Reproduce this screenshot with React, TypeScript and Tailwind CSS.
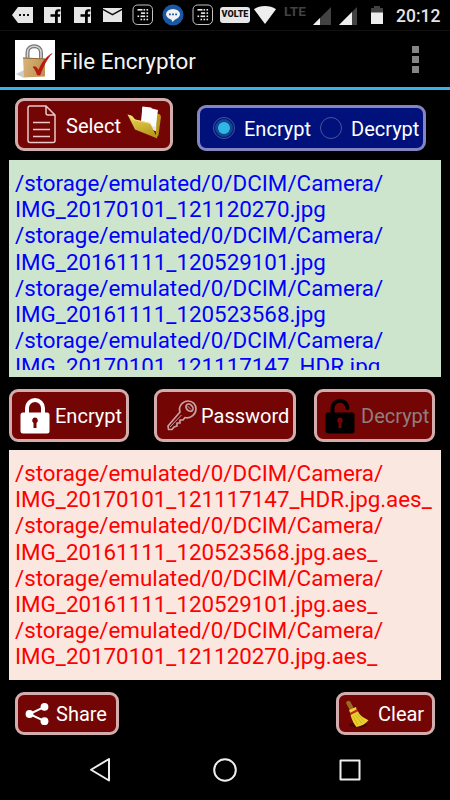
import type { ReactNode } from "react";

const SOURCE_FILES = [
    "IMG_20170101_121120270.jpg",
    "IMG_20161111_120529101.jpg",
    "IMG_20161111_120523568.jpg",
    "IMG_20170101_121117147_HDR.jpg",
];

const ENCRYPTED_FILES = [
    "IMG_20170101_121117147_HDR.jpg.aes_",
    "IMG_20161111_120523568.jpg.aes_",
    "IMG_20161111_120529101.jpg.aes_",
    "IMG_20170101_121120270.jpg.aes_",
];

const FacebookIcon = ({ className }: { className: string }) => (
    <svg viewBox="0 0 17 16" className={`h-4 w-[17px] shrink-0 ${className}`}>
        <path fill="#e6e6e6" d="M0 0h17v16h-3.200V9.800h2.100l.4-2.500h-2.500V5.800c0-.8.4-1.200 1.200-1.200h1.400V2.200h-2.200c-2.100 0-3.200 1.300-3.200 3.200v1.900H6.500v2.500H11V16H0z" />
    </svg>
);

const DialerIcon = ({ className }: { className: string }) => (
    <svg viewBox="0 0 22 22" className={`size-[22px] shrink-0 ${className}`}>
        <rect x="1" y="1" width="19.500" height="19.500" rx="4.500" fill="none" stroke="#c4c4c4" strokeWidth="1" />
        <g fill="#ececec">
            <rect x="5.500" y="5" width="5" height="1.600" />
            <rect x="11.500" y="5" width="1.600" height="1.600" />
            <rect x="14.500" y="5" width="1.600" height="1.600" />
            <rect x="9" y="8.300" width="4.100" height="1.600" />
            <rect x="14.500" y="8.300" width="1.600" height="1.600" />
            <rect x="5.500" y="11.500" width="1.600" height="1.600" />
            <rect x="8.500" y="11.500" width="4.600" height="1.600" />
            <rect x="14.500" y="11.500" width="1.600" height="1.600" />
            <rect x="8.500" y="14.700" width="1.600" height="1.600" />
            <rect x="11.500" y="14.700" width="1.600" height="1.600" />
            <rect x="14.500" y="14.700" width="1.600" height="1.600" />
        </g>
    </svg>
);

const SignalIcon = ({ level, className }: { level: number; className: string }) => (
    <svg viewBox="0 0 18 18" className={`size-[18px] shrink-0 ${className}`}>
        <path fill="#424242" d="M18 0v18H0z" />
        <path fill="#eee" d={`M0 18L${level} ${18 - level}V18z`} />
    </svg>
);

const StatusBar = () => (
    <header className="flex h-[31px] items-start border-b border-[#111] pl-3">
        <svg viewBox="0 0 21 16" className="mt-[7px] h-4 w-[21px] shrink-0">
            <path fill="#e6e6e6" d="M6 0h15v16H6L0 8z" />
            <path stroke="#111" strokeWidth="2" d="M7 8h2M11 8h2M15 8h2" />
        </svg>
        <FacebookIcon className="mt-[7px] ml-[11px]" />
        <FacebookIcon className="mt-[7px] ml-[13px]" />
        <svg viewBox="0 0 19 14" className="mt-2 ml-3 h-[14px] w-[19px] shrink-0">
            <path fill="#e6e6e6" d="M0 0h19v14H0z" />
            <path fill="none" stroke="#111" strokeWidth="1.500" d="M0 1.500l9.500 5.200L19 1.500" />
        </svg>
        <DialerIcon className="mt-1 ml-[10px]" />
        <svg viewBox="0 0 22 22" className="mt-1 ml-2 size-[22px] shrink-0">
            <circle cx="11" cy="11" r="10.500" fill="#1958a5" />
            <ellipse cx="11" cy="10.300" rx="7" ry="5.400" fill="#f2f2f2" />
            <path fill="#f2f2f2" d="M9 14.500h5L10.500 18z" />
            <path stroke="#1958a5" strokeWidth="1.800" d="M7 10.300h1.800M10.100 10.300h1.800M13.200 10.300H15" />
        </svg>
        <DialerIcon className="mt-1 ml-2" />
        <span className="mt-[7px] ml-[6px] flex h-4 w-[30px] shrink-0 items-center justify-center rounded-[3px] bg-[#e6e6e6] text-[9px] font-black text-[#111]">
            VOLTE
        </span>
        <svg viewBox="0 0 22 18" className="mt-[6px] ml-1 h-[18px] w-[22px] shrink-0">
            <path fill="#eee" d="M0 3.200C6-1 16-1 22 3.200L11 18z" />
        </svg>
        <span className="mt-[5px] ml-2 w-[22px] shrink-0 text-[13.500px] leading-[13px] font-bold text-[#424242]">LTE</span>
        <SignalIcon level={7} className="mt-[7px] ml-[7px]" />
        <SignalIcon level={13} className="mt-[7px] ml-[8px]" />
        <svg viewBox="0 0 12 18" className="mt-[6px] ml-[14px] h-[18px] w-3 shrink-0">
            <path fill="#424242" d="M0 2h3V0h6v2h3v5H0z" />
            <path fill="#eee" d="M0 6.500h12V18H0z" />
        </svg>
        <span className="mt-[5px] ml-[13px] text-[17.500px] leading-[22px] font-medium whitespace-nowrap text-[#e4e4e4]">20:12</span>
    </header>
);

const AppLogo = () => (
    <svg viewBox="0 0 40 40" className="mt-px size-10 shrink-0">
        <defs>
            <linearGradient id="lockBody" x1="0" y1="0" x2="1" y2="0.300">
                <stop offset="0" stopColor="#d9b57c" />
                <stop offset="1" stopColor="#c09453" />
            </linearGradient>
        </defs>
        <path fill="#fff" d="M0 0h40v40H0z" />
        <path fill="#aaa" opacity="0.600" d="M1 34l8-4v8z" />
        <path fill="none" stroke="#777" strokeWidth="4" d="M12.500 19v-6.500C12.500 4 26 4 26 12.500V19" />
        <path fill="none" stroke="#d6d6d6" strokeWidth="1.500" d="M12.500 19v-6.500C12.500 4 26 4 26 12.500V19" />
        <path fill="url(#lockBody)" d="M8 17.500l22 1V36.500L9 37.500z" />
        <path fill="#8e6b38" d="M8 17.500l22 1v1l-22-1z" />
        <path fill="#c4160e" stroke="#8e0d08" strokeWidth="0.500" d="M18 27c2-.8 3.500-.5 5.500 3.500C27 22 31 17 37 13.500c-5 5.500-8.500 12-12 21.500h-2.500C21 31.500 20 29 18 27z" />
    </svg>
);

const TitleBar = () => (
    <div className="flex h-[59px] items-center border-b-[3px] border-[#33b5e5] pr-[31px] pl-[15px]">
        <AppLogo />
        <h1 className="mt-[3px] ml-[5px] text-[22.400px] leading-[26px] text-[#f3f3f3]">File Encryptor</h1>
        <div className="mt-px ml-auto flex flex-col gap-[3px]">
            <span className="size-[7px] bg-[#858585]" />
            <span className="size-[7px] bg-[#858585]" />
            <span className="size-[7px] bg-[#858585]" />
        </div>
    </div>
);

const ActionButton = ({ className, children }: { className: string; children: ReactNode }) => (
    <button
        type="button"
        className={`flex shrink-0 items-center rounded-[9px] border-3 border-[#d3adad] bg-[#740505] text-[20px] leading-6 whitespace-nowrap ${className}`}
    >
        {children}
    </button>
);

const DocumentIcon = () => (
    <svg viewBox="0 0 29 39" className="h-[39px] w-[29px] shrink-0" fill="none" stroke="#e8c8c8" strokeWidth="1.500">
        <path d="M3 1h16l9 9v25.500a2 2 0 0 1-2 2H3a2 2 0 0 1-2-2V3a2 2 0 0 1 2-2zM19 1v7a2 2 0 0 0 2 2h7" />
        <path strokeWidth="1.700" d="M6 17.500h17M6 24.500h17M6 31.500h17" />
    </svg>
);

const FolderIcon = () => (
    <svg viewBox="0 0 35 34" className="h-[34px] w-[35px] shrink-0">
        <defs>
            <linearGradient id="folderFront" x1="0" y1="0" x2="0.300" y2="1">
                <stop offset="0" stopColor="#ecd95a" />
                <stop offset="1" stopColor="#b99a1c" />
            </linearGradient>
        </defs>
        <path fill="#b99a18" d="M29 7l4 1.500 1 2L31.500 29 29 32.500z" />
        <path fill="#dfe7f2" d="M15 1.500l15 4-1 20-14-7z" />
        <path fill="#fafcff" d="M15.500.500l8.500 1 1 1 6 1.500-2.500 17L14 15z" />
        <path fill="url(#folderFront)" d="M.500 8.500L5 10l3 3.500 15 3.500 7.500 15.500L8 23.500z" />
        <path fill="#f1e27a" d="M.500 8.500L5 10l3 3.500L23 17l.5 1L6 14z" />
    </svg>
);

const PadlockIcon = ({ open, className }: { open?: boolean; className: string }) => (
    <svg viewBox="0 0 30 36" className={`h-9 w-[30px] shrink-0 ${className}`}>
        <path
            fill="none"
            stroke="currentColor"
            strokeWidth="4"
            strokeLinecap={open ? "round" : "butt"}
            d={open ? "M7.500 16V10.500a7.500 7.500 0 0 1 15-.500" : "M7 16V10a8 8 0 0 1 16 0v6"}
        />
        <rect x="0.500" y="14.500" width="29" height="21" rx="2.500" fill="currentColor" />
        <path fill="#740505" d="M15 19.500a3 3 0 0 1 1.500 5.500V30h-3v-5a3 3 0 0 1 1.500-5.500z" />
    </svg>
);

const KeyIcon = () => (
    <svg viewBox="0 0 30 31" className="h-[31px] w-[30px] shrink-0" fill="none" stroke="#c9a0a0" strokeWidth="1.700" strokeLinejoin="round">
        <path d="M13 12C11 6 16 1 21 1c5 0 8 3.500 8 8 0 5-5 10-11 8.500L16 20h-3v3h-3v3L7 27l-2 2.500H1.500L1 26z" />
        <ellipse cx="22.500" cy="7.700" rx="3" ry="4" transform="rotate(-45 22.500 7.700)" />
        <path strokeWidth="1" d="M20.500 6l3.700 3.700M3 27l11.500-12" />
    </svg>
);

const ShareIcon = () => (
    <svg viewBox="0 0 24 24" className="size-6 shrink-0">
        <path fill="none" stroke="#fff" strokeWidth="2" d="M19.500 4.800L4.500 12l15 7.200" />
        <g fill="#fff">
            <circle cx="19.500" cy="4.800" r="3.900" />
            <circle cx="4.500" cy="12" r="3.900" />
            <circle cx="19.500" cy="19.200" r="3.900" />
        </g>
    </svg>
);

const BroomIcon = () => (
    <svg viewBox="0 0 24 28" className="h-7 w-6 shrink-0">
        <ellipse cx="13" cy="25" rx="9" ry="2.500" fill="#4c0303" />
        <path stroke="#9c6a1e" strokeWidth="4.500" strokeLinecap="round" d="M3.500 3l3 5.500" />
        <path fill="#ead23c" d="M4 10l7-3 .8 3.200-6.500 3z" />
        <path stroke="#c32a16" strokeWidth="2.500" d="M5.500 14l7-3.700" />
        <path fill="#e9d02c" d="M5.500 15l7.500-3.700c2 5 5.500 6 10.500 9-3 3.500-7 6-12 6.700C9 24.500 7 20 5.500 15z" />
        <path fill="none" stroke="#b59412" strokeWidth="0.500" d="M8 16l5 9M10 14.500l7 9M12 13.500l7 8" />
    </svg>
);

const ModeOption = ({ label, checked, className }: { label: string; checked?: boolean; className: string }) => (
    <label className={`flex shrink-0 items-center text-[20px] leading-6 text-white ${className}`}>
        <span className="flex size-[22px] shrink-0 items-center justify-center rounded-full border border-[#4a5399]">
            {checked && <span className="size-[18px] rounded-full border-[3px] border-[#0b4a8c] bg-[#33b5e5]" />}
        </span>
        <span className="mt-[2px] ml-[9px]">{label}</span>
    </label>
);

const FileList = ({ files, className }: { files: string[]; className: string }) => (
    <section className={`mr-[9px] ml-[8.500px] px-[6.500px] ${className}`}>
        <div className="h-full overflow-hidden text-[22.350px] leading-[26.200px] whitespace-nowrap">
            {files.map((file) => (
                <div key={file}>
                    <p>/storage/emulated/0/DCIM/Camera/</p>
                    <p>{file}</p>
                </div>
            ))}
        </div>
    </section>
);

const NavigationBar = () => (
    <nav className="mt-[23px] flex h-6 items-center pl-[90px]">
        <svg viewBox="0 0 20 24" className="h-6 w-5" fill="none" stroke="#eee" strokeWidth="2" strokeLinejoin="round">
            <path d="M19 1v21.500L1 11.750z" />
        </svg>
        <svg viewBox="0 0 24 24" className="ml-[103px] size-6" fill="none" stroke="#eee" strokeWidth="2">
            <circle cx="12" cy="12" r="10.800" />
        </svg>
        <svg viewBox="0 0 22 22" className="ml-[102px] size-[22px]" fill="none" stroke="#eee" strokeWidth="2" strokeLinejoin="round">
            <rect x="1.500" y="1.500" width="19" height="19" />
        </svg>
    </nav>
);

const App = () => {
    return (
        <main className="h-[800px] w-[450px] overflow-hidden bg-black font-[Roboto,sans-serif]">
            <StatusBar />
            <TitleBar />

            <div className="flex items-end pt-2 pl-[15px]">
                <ActionButton className="h-[53px] w-[158px] pl-[9px] text-white">
                    <DocumentIcon />
                    <span className="mt-[2px] ml-[10px] w-[55px]">Select</span>
                    <span className="mb-[3px] ml-[6px]"><FolderIcon /></span>
                </ActionButton>
                <div className="ml-6 flex h-[46px] w-[229px] items-center rounded-[9px] border-3 border-[#8484c2] bg-[#00117c] pl-[13px]">
                    <ModeOption label="Encrypt" checked className="w-[107px]" />
                    <ModeOption label="Decrypt" className="" />
                </div>
            </div>

            <FileList files={SOURCE_FILES} className="mt-[9px] h-[217px] bg-[#cde5cd] pt-[10px] pb-[7px] text-[#0000ff]" />

            <div className="mt-3 flex pl-[9px]">
                <ActionButton className="h-[53px] w-[120px] pl-[8px] text-white">
                    <PadlockIcon className="text-white" />
                    <span className="ml-[5px]">Encrypt</span>
                </ActionButton>
                <ActionButton className="ml-[25px] h-[53px] w-[142px] pl-[10px] text-white">
                    <KeyIcon />
                    <span className="ml-[4px]">Password</span>
                </ActionButton>
                <ActionButton className="ml-[18px] h-[53px] w-[121px] pl-[8px] text-[#8c8080]">
                    <PadlockIcon open className="text-black" />
                    <span className="ml-[6px]">Decrypt</span>
                </ActionButton>
            </div>

            <FileList files={ENCRYPTED_FILES} className="mt-2 h-[230px] bg-[#fae7e0] pt-[10px] text-[#ff0000]" />

            <div className="mt-3 flex justify-between pr-[15px] pl-[15px]">
                <ActionButton className="h-[43px] w-[104px] pl-[7px] text-white">
                    <ShareIcon />
                    <span className="mt-px ml-[7px]">Share</span>
                </ActionButton>
                <ActionButton className="h-[43px] w-[99px] pl-[6px] text-white">
                    <BroomIcon />
                    <span className="mt-px ml-[9px]">Clear</span>
                </ActionButton>
            </div>

            <NavigationBar />
        </main>
    );
};

export default App;
